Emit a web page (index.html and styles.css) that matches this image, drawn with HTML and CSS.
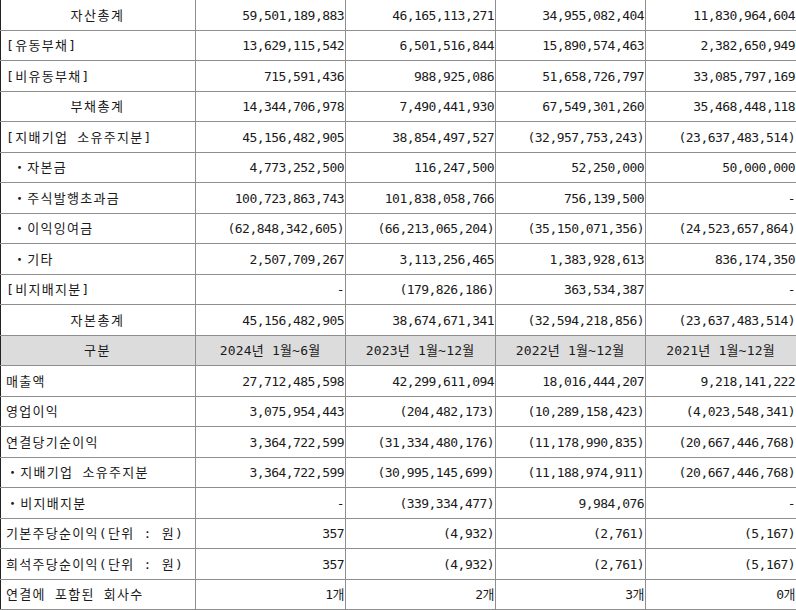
FILE: index.html
```html
<!DOCTYPE html>
<html lang="ko">
<head>
<meta charset="utf-8">
<title>재무정보</title>
<link rel="stylesheet" href="styles.css">
</head>
<body>
<table class="fin">
<colgroup><col class="c1"><col class="c2"><col class="c3"><col class="c4"><col class="c5"></colgroup>
<tbody>
<tr><td class="ctr">자산총계</td><td>59,501,189,883</td><td>46,165,113,271</td><td>34,955,082,404</td><td>11,830,964,604</td></tr>
<tr><td class="lbl">[유동부채]</td><td>13,629,115,542</td><td>6,501,516,844</td><td>15,890,574,463</td><td>2,382,650,949</td></tr>
<tr><td class="lbl">[비유동부채]</td><td>715,591,436</td><td>988,925,086</td><td>51,658,726,797</td><td>33,085,797,169</td></tr>
<tr><td class="ctr">부채총계</td><td>14,344,706,978</td><td>7,490,441,930</td><td>67,549,301,260</td><td>35,468,448,118</td></tr>
<tr><td class="lbl">[지배기업 소유주지분]</td><td>45,156,482,905</td><td>38,854,497,527</td><td>(32,957,753,243)</td><td>(23,637,483,514)</td></tr>
<tr><td class="lbl sub">・자본금</td><td>4,773,252,500</td><td>116,247,500</td><td>52,250,000</td><td>50,000,000</td></tr>
<tr><td class="lbl sub">・주식발행초과금</td><td>100,723,863,743</td><td>101,838,058,766</td><td>756,139,500</td><td>-</td></tr>
<tr><td class="lbl sub">・이익잉여금</td><td>(62,848,342,605)</td><td>(66,213,065,204)</td><td>(35,150,071,356)</td><td>(24,523,657,864)</td></tr>
<tr><td class="lbl sub">・기타</td><td>2,507,709,267</td><td>3,113,256,465</td><td>1,383,928,613</td><td>836,174,350</td></tr>
<tr><td class="lbl">[비지배지분]</td><td>-</td><td>(179,826,186)</td><td>363,534,387</td><td>-</td></tr>
<tr><td class="ctr">자본총계</td><td>45,156,482,905</td><td>38,674,671,341</td><td>(32,594,218,856)</td><td>(23,637,483,514)</td></tr>
<tr class="head"><td class="ctr">구분</td><td>2024년 1월~6월</td><td>2023년 1월~12월</td><td>2022년 1월~12월</td><td>2021년 1월~12월</td></tr>
<tr><td class="lbl">매출액</td><td>27,712,485,598</td><td>42,299,611,094</td><td>18,016,444,207</td><td>9,218,141,222</td></tr>
<tr><td class="lbl">영업이익</td><td>3,075,954,443</td><td>(204,482,173)</td><td>(10,289,158,423)</td><td>(4,023,548,341)</td></tr>
<tr><td class="lbl">연결당기순이익</td><td>3,364,722,599</td><td>(31,334,480,176)</td><td>(11,178,990,835)</td><td>(20,667,446,768)</td></tr>
<tr><td class="lbl">・지배기업 소유주지분</td><td>3,364,722,599</td><td>(30,995,145,699)</td><td>(11,188,974,911)</td><td>(20,667,446,768)</td></tr>
<tr><td class="lbl">・비지배지분</td><td>-</td><td>(339,334,477)</td><td>9,984,076</td><td>-</td></tr>
<tr><td class="lbl">기본주당순이익(단위 : 원)</td><td>357</td><td>(4,932)</td><td>(2,761)</td><td>(5,167)</td></tr>
<tr><td class="lbl">희석주당순이익(단위 : 원)</td><td>357</td><td>(4,932)</td><td>(2,761)</td><td>(5,167)</td></tr>
<tr><td class="lbl">연결에 포함된 회사수</td><td>1개</td><td>2개</td><td>3개</td><td>0개</td></tr>
</tbody>
</table>
</body>
</html>
```
FILE: styles.css
```css
html, body {
  margin: 0;
  padding: 0;
  background: #ffffff;
}
body {
  overflow: hidden;
}
.fin {
  border-collapse: collapse;
  table-layout: fixed;
  width: 796px;
  margin-top: -1px;
  font-family: "DejaVu Sans Mono", "Noto Sans CJK KR", monospace;
  font-size: 13px;
  color: #1a1a1a;
}
.c1 { width: 195px; }
.c2 { width: 150px; }
.c3 { width: 150px; }
.c4 { width: 150px; }
.c5 { width: 151px; }
.fin td {
  border: 1px solid #8e8e8e;
  height: 27.5px;
  padding: 2px 1px 0 0;
  text-align: right;
  white-space: nowrap;
  vertical-align: middle;
  line-height: 16px;
  letter-spacing: -0.55px;
}
.fin td:first-child {
  border-left: 1px solid #222222;
}
.fin td.lbl {
  text-align: left;
  padding-left: 5px;
  letter-spacing: 1.3px;
}
.fin td.sub {
  padding-left: 12px;
}
.fin td.ctr {
  text-align: center;
  letter-spacing: 1.5px;
}
.fin .head td {
  background: #dcdcdc;
  text-align: center;
  letter-spacing: 0.2px;
}
.fin .head td.ctr {
  letter-spacing: 1.5px;
}
```
